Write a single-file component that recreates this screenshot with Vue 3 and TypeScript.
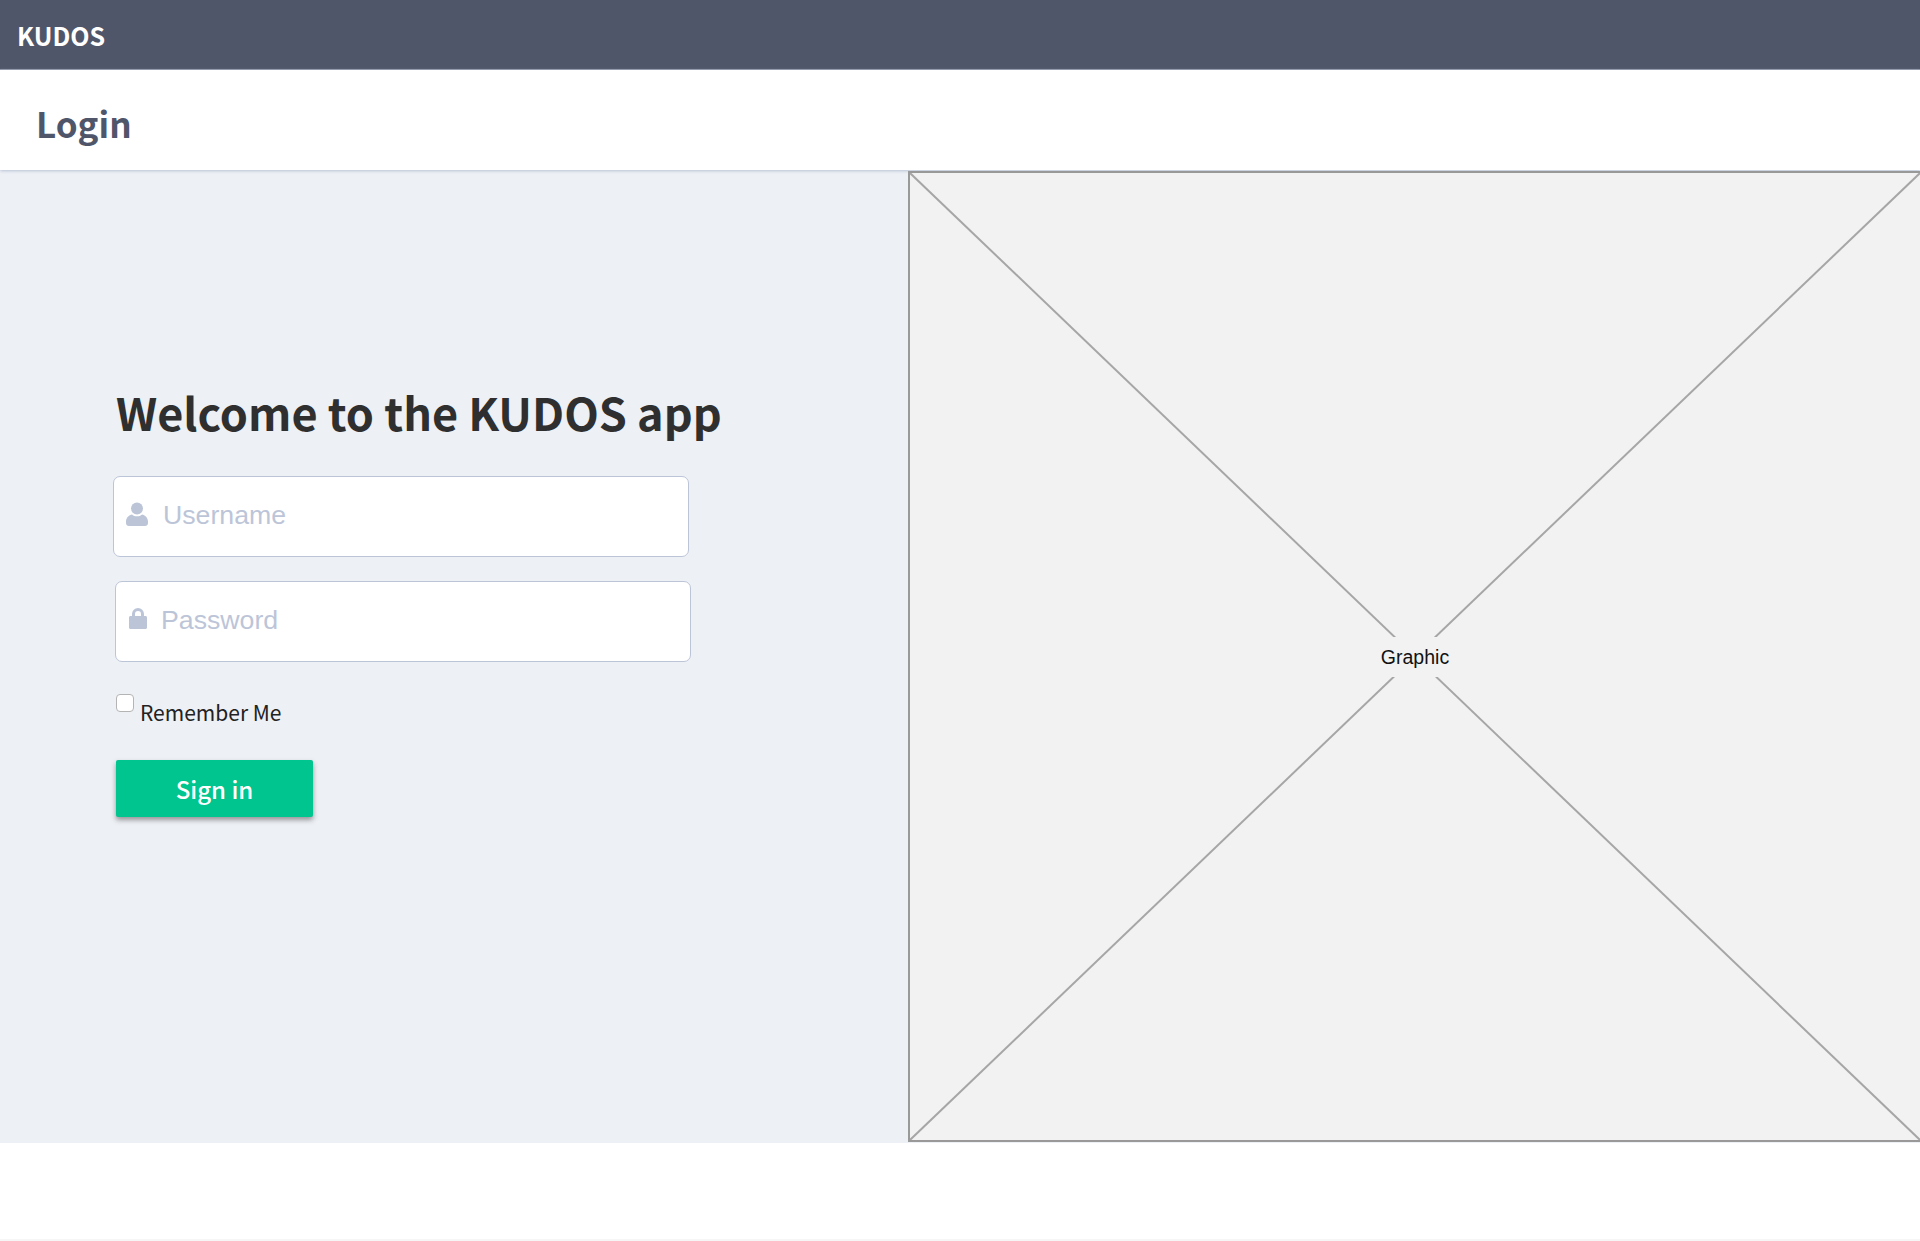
<script setup lang="ts">
import { ref } from 'vue';

const username = ref('');
const password = ref('');
const remember = ref(false);
</script>

<template>
  <div class="page">
    <header class="topbar">KUDOS</header>
    <div class="title-bar">
      <h1>Login</h1>
    </div>
    <main class="content">
      <section class="login">
        <h2>Welcome to the KUDOS app</h2>
        <div class="field field-user">
          <svg class="field-icon" viewBox="0 0 22 24" width="22" height="24">
            <circle cx="11" cy="6.5" r="6" />
            <path d="M0 19.5C0 15.5 3 13 6 12.4 7.2 13.6 9 14.3 11 14.3s3.800-.7 5-1.900c3 .6 6 3.100 6 7.100v1.500C22 22.800 20.800 24 19 24H3C1.200 24 0 22.800 0 21z" />
          </svg>
          <input v-model="username" type="text" placeholder="Username" />
        </div>
        <div class="field field-pass">
          <svg class="field-icon" viewBox="0 0 18 22" width="18" height="22">
            <path fill-rule="evenodd" d="M3 9V7a6 6 0 0 1 12 0v2h1.500c.9 0 1.500.6 1.500 1.500v10c0 .9-.6 1.500-1.500 1.500h-15C.6 22 0 21.400 0 20.500v-10C0 9.600.6 9 1.500 9zm3 0h6V7a3 3 0 0 0-6 0z" />
          </svg>
          <input v-model="password" type="password" placeholder="Password" />
        </div>
        <label class="remember">
          <input v-model="remember" type="checkbox" />
          <span>Remember Me</span>
        </label>
        <button class="sign-in" type="button">Sign in</button>
      </section>
      <section class="graphic">
        <svg class="cross" viewBox="0 0 100 100" preserveAspectRatio="none">
          <line x1="0" y1="0" x2="100" y2="100" vector-effect="non-scaling-stroke" />
          <line x1="100" y1="0" x2="0" y2="100" vector-effect="non-scaling-stroke" />
        </svg>
        <span class="graphic-label">Graphic</span>
      </section>
    </main>
  </div>
</template>

<style>
html,
body {
  margin: 0;
  background: #fff;
}
</style>

<style scoped>
.page {
  height: 1241px;
  overflow: hidden;
  box-sizing: border-box;
  border-bottom: 2px solid #f6f6f6;
  font-family: "Noto Sans CJK SC", "Liberation Sans", sans-serif;
}

.topbar {
  height: 70px;
  box-sizing: border-box;
  padding: 0 17px;
  background: #50566a;
  border-bottom: 1px solid #8d93a5;
  color: #fff;
  font-size: 25px;
  font-weight: 700;
  line-height: 70px;
}

.title-bar {
  position: relative;
  height: 100px;
  box-sizing: border-box;
  padding-left: 36px;
  background: #fff;
  box-shadow: 0 1px 3px #b9c2d4;
}

.title-bar h1 {
  margin: 0;
  color: #50566a;
  font-size: 35px;
  font-weight: 700;
  line-height: 106px;
}

.content {
  display: flex;
  height: 973px;
  background: #edf0f5;
}

.login {
  width: 908px;
  flex: none;
  box-sizing: border-box;
  padding: 210px 0 0 116px;
}

.login h2 {
  margin: 0 0 32px;
  color: #2f2f2f;
  font-size: 45px;
  font-weight: 700;
  line-height: 64px;
  white-space: nowrap;
}

.field {
  position: relative;
  width: 576px;
  height: 81px;
}

.field-user {
  margin-left: -3px;
}

.field-pass {
  margin: 24px 0 0 -1px;
}

.field input {
  width: 100%;
  height: 100%;
  box-sizing: border-box;
  border: 1.500px solid #bcc5d8;
  border-radius: 7px;
  background: #fff;
  font-family: "Liberation Sans", Arial, sans-serif;
  font-size: 26.700px;
  outline: none;
}

.field-user input {
  padding: 0 0 3px 49px;
}

.field-pass input {
  padding: 0 0 3px 45px;
}

.field input::placeholder {
  color: #bcc5d8;
  opacity: 1;
}

.field-icon {
  position: absolute;
  fill: #bcc5d8;
}

.field-user .field-icon {
  top: 26px;
  left: 13px;
}

.field-pass .field-icon {
  top: 26px;
  left: 14px;
}

.remember {
  display: flex;
  align-items: flex-start;
  gap: 6px;
  height: 32px;
  margin-top: 32px;
  color: #222;
  font-size: 21px;
  line-height: 32px;
}

.remember input {
  width: 18px;
  height: 18px;
  margin: 0;
  appearance: none;
  box-sizing: border-box;
  border: 1px solid #b4b4b4;
  border-radius: 4px;
  background: #fff;
}

.remember span {
  margin-top: 2px;
}

.sign-in {
  display: block;
  width: 197px;
  height: 57px;
  margin-top: 34px;
  border: none;
  border-radius: 2px;
  background: #00c58e;
  box-shadow: 0 3px 5px rgba(60, 60, 60, 0.5);
  color: #fff;
  font-family: inherit;
  font-size: 24px;
  font-weight: 500;
}

.graphic {
  position: relative;
  flex: 1;
  height: 971px;
  margin-top: 1px;
  display: flex;
  align-items: center;
  justify-content: center;
  box-sizing: border-box;
  border: 2px solid #999;
  border-right-width: 0;
  background: #f2f2f2;
}

.cross {
  position: absolute;
  inset: 0;
  width: 100%;
  height: 100%;
}

.cross line {
  stroke: #a6a6a6;
  stroke-width: 2px;
}

.graphic-label {
  position: relative;
  padding: 8px 6px;
  background: #f2f2f2;
  color: #111;
  font-family: "Liberation Sans", Arial, sans-serif;
  font-size: 19.500px;
  line-height: 24px;
}
</style>
